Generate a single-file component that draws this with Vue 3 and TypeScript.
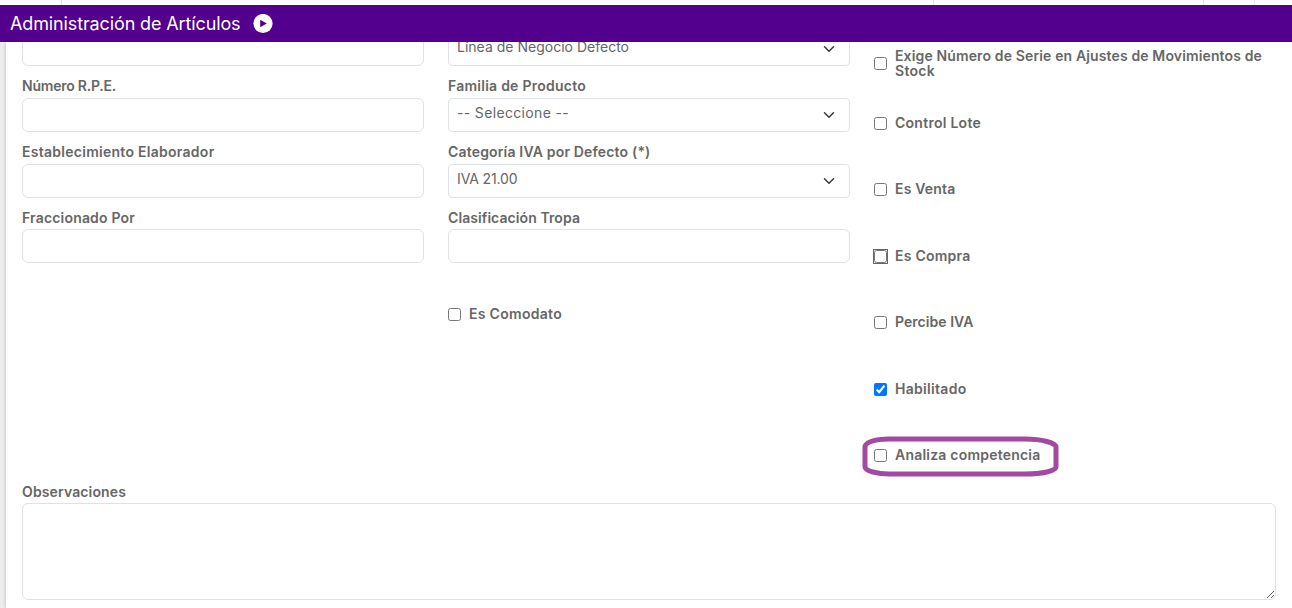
<script setup lang="ts">
import { ref } from 'vue'

interface Field {
  label: string
  width: number
  kind: 'input' | 'select'
  value?: string
  valueWidth?: number
}

interface Check {
  lines: { text: string; width: number }[]
  checked?: boolean
  focused?: boolean
  marked?: boolean
}

const leftFields: Field[] = [
  { label: '', width: 0, kind: 'input' },
  { label: 'Número R.P.E.', width: 94, kind: 'input' },
  { label: 'Establecimiento Elaborador', width: 192.5, kind: 'input' },
  { label: 'Fraccionado Por', width: 113, kind: 'input' },
]

const middleFields: Field[] = [
  { label: '', width: 0, kind: 'select', value: 'Línea de Negocio Defecto', valueWidth: 172 },
  { label: 'Familia de Producto', width: 138, kind: 'select', value: '-- Seleccione --', valueWidth: 112 },
  { label: 'Categoría IVA por Defecto (*)', width: 202.5, kind: 'select', value: 'IVA 21.00', valueWidth: 60.5 },
  { label: 'Clasificación Tropa', width: 132, kind: 'input' },
]

const checks = ref<Check[]>([
  {
    lines: [
      { text: 'Exige Número de Serie en Ajustes de Movimientos de', width: 367 },
      { text: 'Stock', width: 40 },
    ],
  },
  { lines: [{ text: 'Control Lote', width: 86 }] },
  { lines: [{ text: 'Es Venta', width: 60.5 }] },
  { lines: [{ text: 'Es Compra', width: 75.5 }], focused: true },
  { lines: [{ text: 'Percibe IVA', width: 78.5 }] },
  { lines: [{ text: 'Habilitado', width: 71.5 }], checked: true },
  { lines: [{ text: 'Analiza competencia', width: 145.5 }], marked: true },
])

const comodato = ref(false)

// Tracks a text out or in so that it takes the given width.
const vFit = {
  mounted(el: HTMLElement, binding: { value: number }) {
    const count = (el.textContent ?? '').trim().length
    if (!count || !binding.value) return
    const natural = el.getBoundingClientRect().width
    el.style.letterSpacing = `${(binding.value - natural) / count}px`
  },
}
</script>

<template>
  <div class="page">
    <div class="tabs"><i></i><i></i><i></i><i></i></div>
    <header class="bar">
      <h1><span v-fit="230.5">Administración de Artículos</span></h1>
      <svg class="play" viewBox="0 0 20 20" aria-hidden="true">
        <circle cx="10" cy="9.5" r="9.6" fill="#fff" />
        <path d="M7.2 5.8v7.4L13.8 9.5z" fill="#54008f" />
      </svg>
    </header>
    <div class="viewport">
      <main class="card">
        <div class="columns">
          <section v-for="(fields, c) in [leftFields, middleFields]" :key="c">
            <div v-for="(f, i) in fields" :key="i" class="field" :class="{ first: i === 0 }">
              <label v-if="f.label" class="label"><span v-fit="f.width">{{ f.label }}</span></label>
              <input v-if="f.kind === 'input'" class="control" type="text" />
              <div v-else class="control select">
                <span v-fit="f.valueWidth ?? 0">{{ f.value }}</span>
                <svg viewBox="0 0 16 16" aria-hidden="true">
                  <path d="M2 5l6 6 6-6" fill="none" stroke="#343a40" stroke-width="2" stroke-linecap="round" stroke-linejoin="round" />
                </svg>
              </div>
            </div>
            <label v-if="c === 1" class="check comodato">
              <span class="tick"><input v-model="comodato" type="checkbox" /></span>
              <span class="text"><span v-fit="93">Es Comodato</span></span>
            </label>
          </section>
          <section class="checks">
            <label v-for="(k, i) in checks" :key="i" class="check" :class="{ focused: k.focused }">
              <span class="tick"><input v-model="k.checked" type="checkbox" /></span>
              <span class="text">
                <span v-for="l in k.lines" :key="l.text" class="line"><span v-fit="l.width">{{ l.text }}</span></span>
              </span>
              <svg v-if="k.marked" class="mark" viewBox="0 0 198 42" aria-hidden="true">
                <path d="M27 3H163C180 3 194 7 194 11V31C194 35 180 38 163 38H27C16 38 3 35 3 31V11C3 7 11 3 27 3Z" fill="none" stroke="#a349a4" stroke-width="5" />
              </svg>
            </label>
          </section>
        </div>
        <div class="notes">
          <label class="label"><span v-fit="104">Observaciones</span></label>
          <textarea></textarea>
        </div>
      </main>
    </div>
  </div>
</template>

<style>
body {
  margin: 0;
  overflow: hidden;
}
</style>

<style scoped>
.page {
  width: 1292px;
  height: 608px;
  display: flex;
  flex-direction: column;
  overflow: hidden;
  background: #fff;
  color: #666;
  font-family: Inter, "Liberation Sans", sans-serif;
  font-size: 14px;
}
.page * {
  box-sizing: border-box;
}
.tabs {
  height: 5px;
  flex: none;
  display: grid;
  grid-template-columns: 62px 872px 270px 51px;
}
.tabs i {
  border-right: 1px solid #e8e8e8;
}
.bar {
  height: 37px;
  flex: none;
  display: flex;
  align-items: center;
  gap: 12px;
  padding-left: 10px;
  background: #54008f;
  color: #fff;
}
h1 {
  margin: 0;
  width: 231px;
  font-size: 18px;
  font-weight: 400;
  line-height: 37px;
  white-space: nowrap;
}
.play {
  width: 20px;
  height: 20px;
}
.viewport {
  flex: 1;
  min-height: 0;
  overflow: hidden;
  padding-left: 6px;
  background: #ededed;
}
.card {
  height: 100%;
  padding: 0 16px;
  background: #fff;
  box-shadow: 0 0 4px rgba(0, 0, 0, 0.22);
}
.columns {
  display: grid;
  grid-template-columns: repeat(3, 402px);
  gap: 24px;
  height: 437px;
}
.field {
  height: 65.67px;
  display: flex;
  flex-direction: column;
  justify-content: flex-end;
}
.field.first {
  height: 34px;
  margin-top: -9.67px;
}
.label {
  display: block;
  font-weight: 600;
  line-height: 17px;
  white-space: nowrap;
}
.field .label {
  margin-bottom: 3.6px;
}
.control {
  width: 402px;
  height: 34px;
  flex: none;
  border: 1px solid #dee2e6;
  border-radius: 6px;
  background: #fff;
  outline: none;
}
.select {
  display: flex;
  align-items: center;
  justify-content: space-between;
  padding: 0 14px 0 8px;
  border-radius: 4px;
  line-height: 17px;
  white-space: nowrap;
}
.select span {
  margin-bottom: 5px;
}
.select svg {
  width: 12px;
  height: 12px;
}
.check {
  position: relative;
  display: flex;
  align-items: center;
  gap: 8px;
  height: 66.4px;
  font-weight: 600;
  line-height: 15px;
  white-space: nowrap;
}
.tick {
  display: block;
  flex: none;
  width: 13px;
  height: 13px;
}
.check input {
  display: block;
  margin: 0;
  width: 13px;
  height: 13px;
}
.focused .tick {
  outline: 1px solid #9b30f0;
}
.text {
  margin-top: -2px;
}
.line {
  display: block;
}
.checks {
  margin-top: -4.5px;
}
.checks .check:first-child {
  height: 52px;
  margin-bottom: 0.8px;
}
.comodato {
  height: 15px;
  margin-top: 43.6px;
}
.mark {
  position: absolute;
  left: -12px;
  top: 13.5px;
  width: 198px;
  height: 42px;
  overflow: visible;
}
.notes .label {
  margin: 4px 0 3px;
}
textarea {
  display: block;
  width: 1254px;
  height: 97px;
  border: 1px solid #dee2e6;
  border-radius: 6px;
  outline: none;
  resize: both;
}
</style>
